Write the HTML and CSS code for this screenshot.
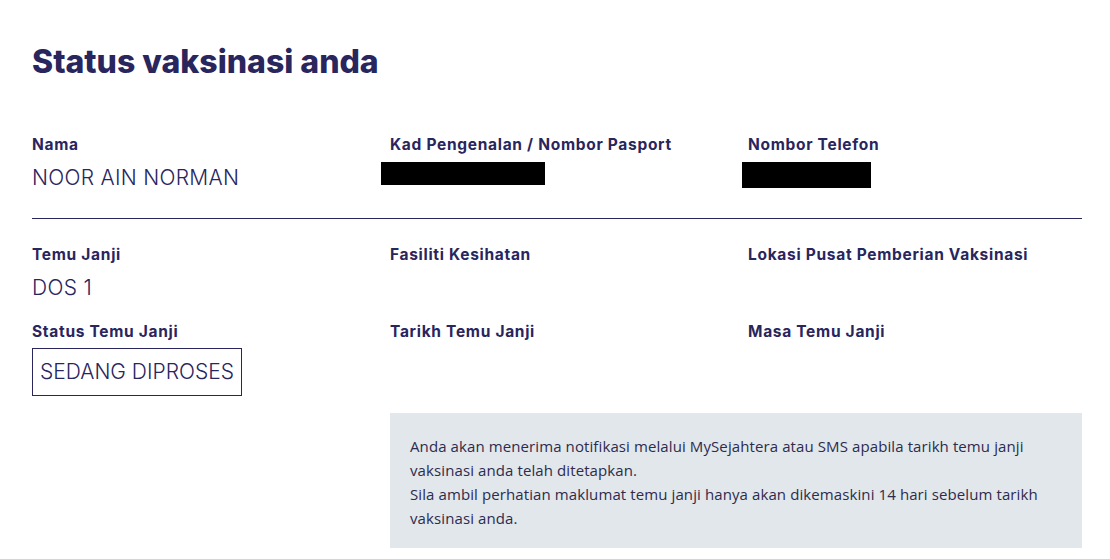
FILE: index.html
```html
<!DOCTYPE html>
<html lang="ms">
<head>
<meta charset="utf-8">
<title>Status vaksinasi anda</title>
<link rel="stylesheet" href="styles.css">
</head>
<body>
<main class="page">
  <h1 class="title">Status vaksinasi anda</h1>

  <section class="grid">
    <div class="field">
      <div class="label">Nama</div>
      <div class="value">NOOR AIN NORMAN</div>
    </div>
    <div class="field">
      <div class="label">Kad Pengenalan / Nombor Pasport</div>
      <div class="redact redact-ic"></div>
    </div>
    <div class="field">
      <div class="label">Nombor Telefon</div>
      <div class="redact redact-phone"></div>
    </div>
  </section>

  <hr class="divider">

  <section class="grid grid-second">
    <div class="field">
      <div class="label">Temu Janji</div>
      <div class="value">DOS 1</div>
    </div>
    <div class="field">
      <div class="label">Fasiliti Kesihatan</div>
    </div>
    <div class="field">
      <div class="label">Lokasi Pusat Pemberian Vaksinasi</div>
    </div>
    <div class="field">
      <div class="label">Status Temu Janji</div>
      <div class="status">SEDANG DIPROSES</div>
    </div>
    <div class="field">
      <div class="label">Tarikh Temu Janji</div>
    </div>
    <div class="field">
      <div class="label">Masa Temu Janji</div>
    </div>
    <div class="notice">
      Anda akan menerima notifikasi melalui MySejahtera atau SMS apabila tarikh temu janji vaksinasi anda telah ditetapkan.<br>
      Sila ambil perhatian maklumat temu janji hanya akan dikemaskini 14 hari sebelum tarikh vaksinasi anda.
    </div>
  </section>
</main>
</body>
</html>
```

FILE: styles.css
```css
* { box-sizing: border-box; }

html, body {
  margin: 0;
  background: #ffffff;
}

body {
  font-family: "Inter", "Liberation Sans", sans-serif;
  color: #29255d;
}

.page {
  width: 1110px;
  padding: 42px 28px 0 32px;
}

.title {
  margin: 0 0 52px;
  font-size: 32px;
  line-height: 40px;
  font-weight: 800;
  color: #29255d;
}

.grid {
  display: grid;
  grid-template-columns: 358px 358px 1fr;
  row-gap: 17px;
}

.label {
  font-size: 15.5px;
  line-height: 22px;
  font-weight: 700;
  letter-spacing: 0.7px;
}

.value {
  margin-top: 6px;
  font-size: 21px;
  line-height: 32px;
  font-weight: 300;
  letter-spacing: 0.3px;
}

.redact {
  margin-top: 6px;
  background: #000000;
}

.redact-ic {
  width: 164px;
  height: 23px;
  margin-left: -9px;
}

.redact-phone {
  width: 129px;
  height: 26px;
  margin-left: -6px;
}

.divider {
  margin: 24px 0 25px;
  border: 0;
  border-top: 1px solid #29255d;
}

.status {
  display: inline-block;
  margin-top: 5px;
  padding: 7px 7px;
  border: 1px solid #29255d;
  font-size: 21px;
  line-height: 32px;
  font-weight: 300;
}

.notice {
  grid-column: 2 / 4;
  margin-top: 0;
  padding: 21px 20px 18px;
  background: #e1e7ea;
  font-family: "Open Sans", "Noto Sans", sans-serif;
  font-size: 15px;
  line-height: 24px;
  letter-spacing: 0.1px;
  color: #2e2b4f;
}
```
